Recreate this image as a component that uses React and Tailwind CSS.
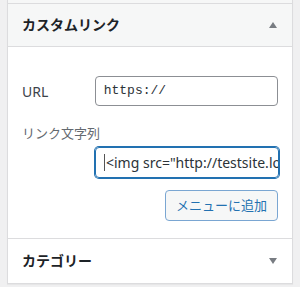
export default function App() {
  const jp = { fontFamily: '"Noto Sans", "Noto Sans CJK JP", sans-serif' };
  return (
    <div className="w-[300px] h-[287px] bg-[#f0f0f1] overflow-hidden" style={jp}>
      <div className="ml-[7px] w-[286px] bg-white border-x border-b border-[#dcdcde] shadow-[0_1px_1px_rgba(0,0,0,0.04)]">
        <div className="h-[3px] bg-[#f6f7f7]" />
        {/* Custom link section */}
        <div className="border-t border-[#dcdcde]">
          <div className="h-[43px] bg-[#f6f7f7] border-b border-[#dcdcde] flex items-center justify-between pl-[14px] pr-[15px]">
            <h3 className="text-[14px] font-bold text-[#1d2327] leading-none">カスタムリンク</h3>
            <span className="w-0 h-0 border-x-[4px] border-x-transparent border-b-[6px] border-b-[#787c82]" />
          </div>
          <div className="pt-[29px] pb-[17px] pl-[14px] pr-[14px]">
            <div className="flex items-center">
              <label className="w-[73px] text-[14px] text-[#3c434a]">URL</label>
              <div className="w-[184px] h-[30px] border border-[#8c8f94] rounded-[4px] flex items-center px-[8px] text-[13px] text-[#2c3338]" style={{ fontFamily: '"Liberation Mono", monospace' }}>
                https://
              </div>
            </div>
            <div className="mt-[17px] text-[13px] text-[#646970] leading-[20px]">リンク文字列</div>
            <div className="mt-[4px] ml-[73px] w-[184px] h-[31px] border border-[#2271b1] rounded-[4px] shadow-[0_0_0_1px_#2271b1] flex items-center pl-[8px] overflow-hidden whitespace-nowrap text-[14px] text-[#2c3338]">
              <span className="w-px h-[17px] bg-[#555] mr-[1px] shrink-0" />
              <span className="overflow-hidden">{'<img src="http://testsite.local/wp-content'}</span>
            </div>
            <div className="flex justify-end mt-[12px]">
              <button className="w-[113px] h-[31px] border border-[#7aa6d2] rounded-[4px] bg-[#f6f7f7] text-[13px] text-[#2271b1] leading-none">
                メニューに追加
              </button>
            </div>
          </div>
        </div>
        {/* Category section */}
        <div className="border-t border-[#dcdcde] h-[45px] flex items-center justify-between pl-[14px] pr-[15px]">
          <h3 className="text-[14px] font-bold text-[#1d2327] leading-none">カテゴリー</h3>
          <span className="w-0 h-0 border-x-[4px] border-x-transparent border-t-[6px] border-t-[#787c82]" />
        </div>
      </div>
    </div>
  );
}
